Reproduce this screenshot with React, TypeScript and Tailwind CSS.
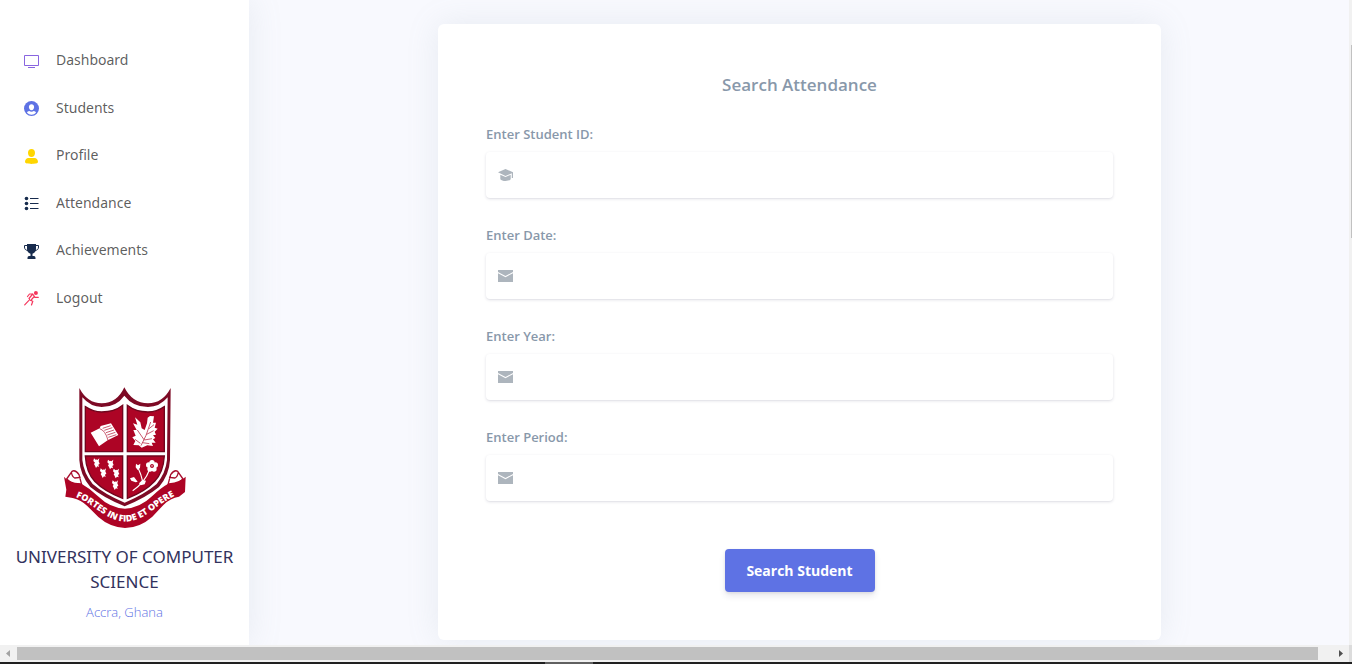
import React from "react";

type IconProps = { className?: string };

const TvIcon = ({ className }: IconProps) => (
  <svg viewBox="0 0 15 15" className={className} fill="none" stroke="currentColor" aria-hidden="true">
    <path d="M.5 1.500h14v10H.5zM4 13.500h7" />
  </svg>
);

const UserCircleIcon = ({ className }: IconProps) => (
  <svg viewBox="0 0 15 15" className={className} aria-hidden="true">
    <circle cx="7.500" cy="7.500" r="7.500" fill="currentColor" />
    <path fill="#fff" d="M7.500 3.200c1.600 0 2.600 1.100 2.600 2.800S9 9.300 7.500 9.300 4.900 7.700 4.900 6s1-2.800 2.600-2.800z" />
    <path fill="#fff" d="M5.300 10.100c1.200.8 3.200.8 4.400 0 1.200.2 2 .8 2.300 1.700A6 6 0 0 1 7.500 13.700 6 6 0 0 1 3 11.800c.3-.9 1.100-1.500 2.300-1.700z" />
  </svg>
);

const PersonIcon = ({ className }: IconProps) => (
  <svg viewBox="0 0 15 15" className={className} fill="currentColor" aria-hidden="true">
    <path d="M7.500 0C9.700 0 11 1.700 11 3.900S9.600 8 7.500 8 4 6.100 4 3.900 5.300 0 7.500 0zM4.600 9h5.800c2.300 0 3.600 1.700 3.600 4.100 0 1.200-3 1.900-6.500 1.900S1 14.300 1 13.100C1 10.700 2.300 9 4.600 9z" />
  </svg>
);

const ListIcon = ({ className }: IconProps) => (
  <svg viewBox="0 0 15 15" className={className} fill="currentColor" aria-hidden="true">
    <circle cx="2.500" cy="2.500" r="1.800" />
    <circle cx="2.500" cy="7.500" r="1.800" />
    <circle cx="2.500" cy="12.500" r="1.800" />
    <path d="M6 2h8.500v1H6zM6 7h8.500v1H6zM6 12h8.500v1H6z" />
  </svg>
);

const TrophyIcon = ({ className }: IconProps) => (
  <svg viewBox="0 0 15 15" className={className} aria-hidden="true">
    <path
      fill="currentColor"
      d="M3 0h9v5c0 2.500-1.400 4.100-3.500 4.700V12H10c.8 0 1.500.8 1.500 2v1h-8v-1c0-1.200.7-2 1.500-2h1.500V9.700C4.400 9.100 3 7.500 3 5z"
    />
    <path fill="none" stroke="currentColor" d="M3.500 1.500h-3V3c0 2 1 3.300 3.500 3.500M11.500 1.500h3V3c0 2-1 3.300-3.500 3.500" />
  </svg>
);

const RunIcon = ({ className }: IconProps) => (
  <svg viewBox="0 0 15 15" className={className} fill="none" stroke="currentColor" strokeWidth="1.200" aria-hidden="true">
    <circle cx="11.900" cy="2" r="2" fill="currentColor" stroke="none" />
    <path
      strokeLinecap="round"
      strokeLinejoin="round"
      d="M3.500 5.500 5.500 3h3.200l2.300 3.300h3.300M8.700 3 5 7.500l1.200 1.800 2.600.9L7.500 14M10.300 5.300 7.600 8.500M4.700 9.700 .7 13.800"
    />
  </svg>
);

const HatIcon = ({ className }: IconProps) => (
  <svg viewBox="0 0 15 15" className={className} fill="currentColor" aria-hidden="true">
    <path d="M7.500 1 15 4.300v5.700h-1.200V5.300L7.500 8 0 4.300z" />
    <path d="M2.300 6.700 7.500 9.100l5.200-2.400v4.500c-1 1.200-2.800 1.800-5.200 1.800s-4.200-.6-5.200-1.800z" />
  </svg>
);

const MailIcon = ({ className }: IconProps) => (
  <svg viewBox="0 0 15 15" className={className} fill="currentColor" aria-hidden="true">
    <path d="M0 1h15v2L7.500 7 0 3z" />
    <path d="M0 4.200 7.500 8.200 15 4.200V13H0z" />
  </svg>
);

const Insect = ({ x, y }: { x: number; y: number }) => (
  <path
    transform={`translate(${x} ${y})`}
    fill="#fff"
    d="M-8-13-2-8 0-10 2-8 8-13 6-4 9 3 5 6 7 13 2 11-2 16-5 9-8 4-5 0-10-5z"
  />
);

const Crest = ({ className }: IconProps) => (
  <svg viewBox="0 0 450 465" className={className} role="img" aria-label="University crest">
    <path
      fill="#7d0a25"
      d="M88 24Q112 70 155 70 201 70 223 22 247 70 294 70 338 70 362 24L360 240Q358 284 327 321 288 353 224 379 160 353 121 321 90 284 88 240z"
    />
    <path
      fill="#fff"
      d="M97 52Q122 81 155 81 199 81 223 47 249 81 294 81 329 81 353 52L351 240Q347 279 320 312 284 343 224 368 164 343 128 312 101 279 97 240z"
    />
    <path
      fill="#ad0425"
      stroke="#70051d"
      strokeWidth="4"
      d="M106 80Q130 96 155 96 194 96 218 76V215H106zM232 76Q257 96 294 96 320 96 343 80V215H232zM106 228H218V355Q164 335 134 304 109 277 106 228zM232 228H343Q340 277 314 304 284 336 232 355z"
    />
    <path fill="#fff" d="M122 158 149 145 152 138 183 130 205 165 173 181 147 199z" />
    <path
      fill="none"
      stroke="#ad0425"
      strokeWidth="2"
      d="M149 146Q166 151 174 181M158 145 182 137M163 151 187 143M168 158 192 150M172 165 196 157M175 172 199 164"
    />
    <path
      fill="#fff"
      d="M275 203 266 196 250 195 256 183 247 172 257 167 250 150 260 150 249 130 262 134 255 112 271 127 275 145 284 150 291 130 293 113 300 108 312 109 309 128 318 128 314 143 323 146 314 155 318 164 309 166 316 174 309 178 317 188 305 188 309 198 292 196z"
    />
    <path
      fill="none"
      stroke="#ad0425"
      strokeWidth="2"
      d="M273 197Q289 170 302 126M282 179 262 150M283 180 306 176M290 163 311 152M297 146 312 134M271 190 255 178M278 188 298 191"
    />
    <Insect x={140} y={248} />
    <Insect x={182} y={252} />
    <Insect x={160} y={278} />
    <Insect x={199} y={279} />
    <Insect x={196} y={314} />
    <path fill="none" stroke="#fff" strokeWidth="3.500" d="M248 332Q285 307 298 270M278 304Q274 284 264 263" />
    <path fill="#fff" d="M258 251 264 256 271 251 270 264 263 270 257 262zM240 295 252 291 263 305 257 307 244 302zM267 310 277 300 288 302 284 313 272 316z" />
    <g fill="#fff">
      <circle cx="306" cy="248" r="8" />
      <circle cx="316" cy="255" r="8" />
      <circle cx="312" cy="267" r="8" />
      <circle cx="300" cy="267" r="8" />
      <circle cx="296" cy="255" r="8" />
    </g>
    <circle cx="306" cy="258" r="5" fill="none" stroke="#ad0425" strokeWidth="2.500" />
    <g fill="#fff" stroke="#a80e2e" strokeWidth="4" strokeLinejoin="round">
      <path d="M50 297 66 274Q76 268 87 284L95 314 66 310zM64 276Q66 290 74 294L92 292" />
      <path d="M399 297 383 274Q373 268 362 284L354 314 383 310zM385 276Q383 290 375 294L357 292" />
    </g>
    <path
      fill="#ad0425"
      d="M42 290Q54 308 92 310 119 325 144 349 181 385 225 386 270 384 306 349 332 324 357 310 391 306 407 290L405 336 387 350Q361 354 341 374L307 410Q270 443 225 444 180 442 145 411L111 377Q94 361 68 354L46 350 49 329z"
    />
    <path id="motto-arc" fill="none" d="M60 346C124 360 165 424 225 425 288 424 318 370 390 340" />
    <text fill="#fff" fontFamily="Open Sans, sans-serif" fontWeight="800" fontSize="27">
      <textPath href="#motto-arc" startOffset="50%" textAnchor="middle">
        FORTES IN FIDE ET OPERE
      </textPath>
    </text>
  </svg>
);

const navItems = [
  { label: "Dashboard", Icon: TvIcon, color: "text-[#8965e0]" },
  { label: "Students", Icon: UserCircleIcon, color: "text-[#5e72e4]" },
  { label: "Profile", Icon: PersonIcon, color: "text-[#ffd600]" },
  { label: "Attendance", Icon: ListIcon, color: "text-[#172b4d]" },
  { label: "Achievements", Icon: TrophyIcon, color: "text-[#172b4d]" },
  { label: "Logout", Icon: RunIcon, color: "text-[#f5365c]" },
];

const fields = [
  { id: "student-id", label: "Enter Student ID:", Icon: HatIcon },
  { id: "date", label: "Enter Date:", Icon: MailIcon },
  { id: "year", label: "Enter Year:", Icon: MailIcon },
  { id: "period", label: "Enter Period:", Icon: MailIcon },
];

function Sidebar() {
  return (
    <aside className="z-10 flex w-[249px] shrink-0 flex-col bg-white pt-12 shadow-[0_0_32px_0_rgba(136,152,170,0.15)]">
      <nav>
        <ul className="flex h-[262px] flex-col justify-between">
          {navItems.map(({ label, Icon, color }) => (
            <li key={label}>
              <a
                href="#"
                className="flex h-6 items-center gap-[17px] pl-6 font-['Noto_Sans',sans-serif] text-sm text-black/65"
              >
                <Icon className={`mt-[2px] size-[15px] shrink-0 ${color}`} />
                {label}
              </a>
            </li>
          ))}
        </ul>
      </nav>
      <div className="flex flex-col items-center pt-[70px] text-center">
        <Crest className="h-[155px] w-[150px]" />
        <h2 className="mt-[9px] px-2 font-['Noto_Sans',sans-serif] text-[17px] leading-[25px] text-[#32325d]">
          UNIVERSITY OF COMPUTER SCIENCE
        </h2>
        <p className="mt-2 text-[13px] leading-5 font-light text-[#5e72e4]">Accra, Ghana</p>
      </div>
    </aside>
  );
}

function SearchCard() {
  return (
    <form
      onSubmit={(e: React.FormEvent) => e.preventDefault()}
      className="flex w-full max-w-[723px] flex-col self-start rounded-md bg-white p-12 shadow-[0_0_32px_0_rgba(136,152,170,0.15)]"
    >
      <h1 className="text-center text-[17px] leading-[26px] font-semibold text-[#8898aa]">Search Attendance</h1>
      <div className="mt-[23px] flex flex-col gap-6">
        {fields.map(({ id, label, Icon }) => (
          <div key={id}>
            <label htmlFor={id} className="mb-2 block h-[23px] text-[13px] leading-[26px] font-semibold text-[#8898aa]">
              {label}
            </label>
            <div className="flex h-[46px] items-center rounded bg-white shadow-[0_1px_3px_rgba(50,50,93,0.15),0_1px_0_rgba(0,0,0,0.02)]">
              <label htmlFor={id} className="px-3 text-[#adb5bd]">
                <Icon className="size-[15px]" />
              </label>
              <input id={id} type="text" className="h-full min-w-0 flex-1 bg-transparent text-sm text-[#8898aa] outline-none" />
            </div>
          </div>
        ))}
      </div>
      <button
        type="submit"
        className="mt-12 h-[43px] w-[150px] self-center rounded bg-[#5e72e4] text-sm font-bold text-white shadow-[0_4px_6px_rgba(50,50,93,0.11),0_1px_3px_rgba(0,0,0,0.08)]"
      >
        Search Student
      </button>
    </form>
  );
}

export default function App() {
  return (
    <div className="flex h-screen flex-col overflow-hidden bg-[#f8f9fe] font-['Open_Sans',sans-serif]">
      <div className="flex min-h-0 flex-1">
        <Sidebar />
        <main className="flex min-w-0 flex-1 justify-center overflow-hidden pt-6 pl-px">
          <SearchCard />
        </main>
        <div className="w-[3px] shrink-0 bg-[#f1f1f1] pt-[45px] pl-[2px]">
          <div className="h-[193px] bg-[#c1c1c1]" />
        </div>
      </div>
      <div className="z-20 flex h-[17px] shrink-0 items-center bg-[#f1f1f1]">
        <svg viewBox="0 0 17 17" className="size-[17px] shrink-0 text-[#a3a3a3]" fill="currentColor" aria-hidden="true">
          <path d="M10 5v7L6 8.500z" />
        </svg>
        <div className="h-[13px] flex-1 bg-[#c1c1c1]" />
        <div className="flex w-[31px] shrink-0 justify-end">
          <svg viewBox="0 0 17 17" className="size-[17px] text-[#505050]" fill="currentColor" aria-hidden="true">
            <path d="M7 5v7l4-3.500z" />
          </svg>
        </div>
        <div className="h-full w-[3px] bg-[#dcdcdc]" />
      </div>
      <div className="z-20 flex h-[2px] shrink-0 justify-center bg-[#202020] pr-[214px]">
        <div className="w-12 bg-[#606060]" />
      </div>
    </div>
  );
}
